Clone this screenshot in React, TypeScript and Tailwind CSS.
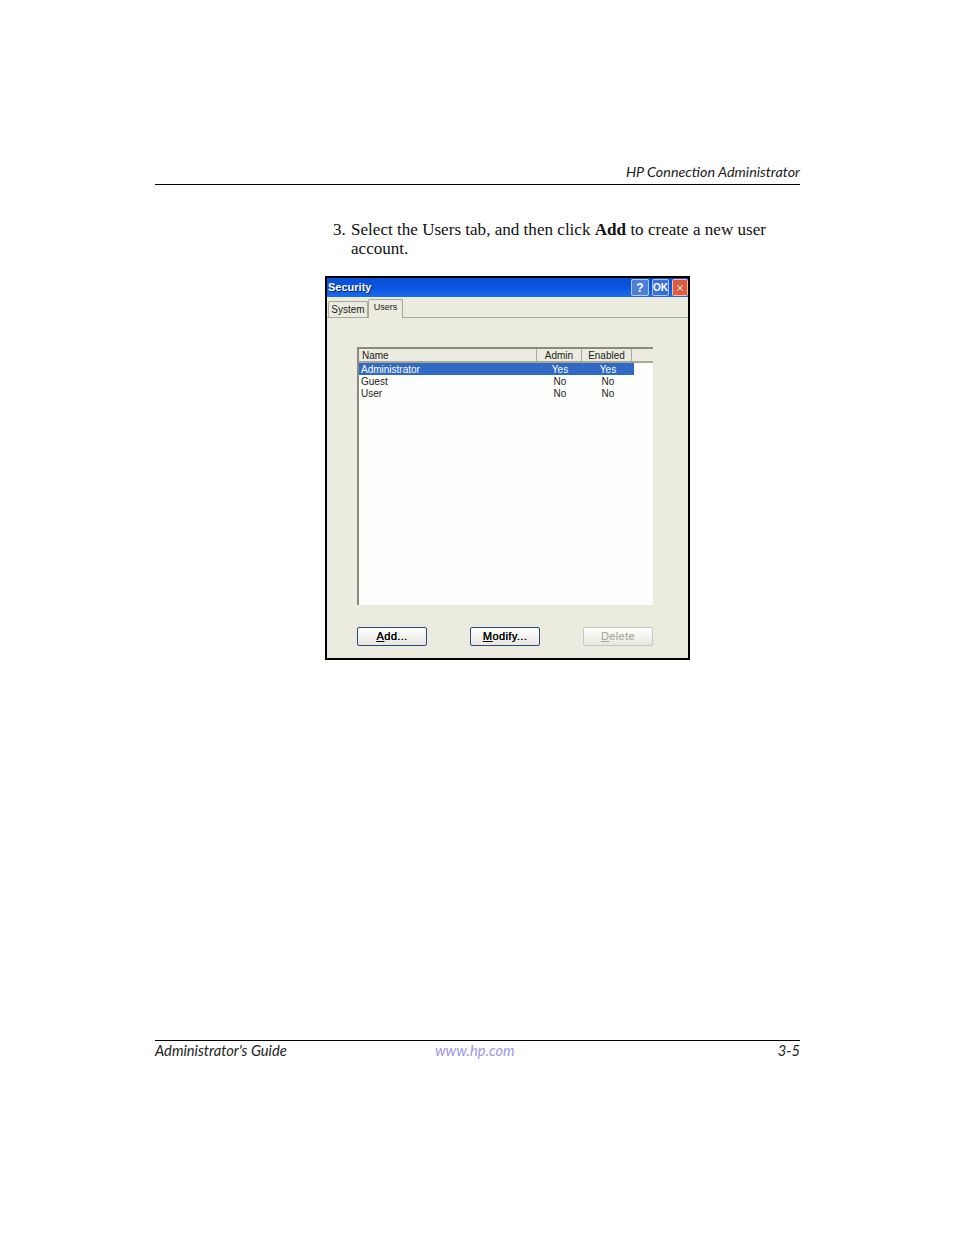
import React from "react";
import { X } from "lucide-react";

const users = [
  { name: "Administrator", admin: "Yes", enabled: "Yes" },
  { name: "Guest", admin: "No", enabled: "No" },
  { name: "User", admin: "No", enabled: "No" },
];

const pageFont = "font-['Lato','Liberation_Sans',sans-serif]";
const uiFont = "font-['Liberation_Sans','Noto_Sans',sans-serif]";

const TitleButton = ({ className, children }: { className: string; children: React.ReactNode }) => (
  <div className={`flex h-[17px] items-center justify-center rounded-[2px] border border-white/60 text-white ${className}`}>
    {children}
  </div>
);

const DialogButton = ({ hotkey, rest, disabled }: { hotkey: string; rest: string; disabled?: boolean }) => (
  <button
    className={`flex h-[19px] w-[70px] items-center justify-center rounded-[2px] border bg-gradient-to-b from-white to-[#e8e7df] text-[11px] leading-none tracking-[0.4px] ${
      disabled ? "border-[#c9c7ba] text-[#a1a192]" : "border-[#2a4a7a] text-black [text-shadow:0.2px_0_0_#000]"
    }`}
  >
    <span className="underline">{hotkey}</span>
    {rest}
  </button>
);

export default function App() {
  return (
    <div className="h-[1235px] w-[954px] bg-white pl-[155px] pt-[164px]">
      <div className="w-[645px]">
        <div className={`flex h-[21px] items-start justify-end border-b border-black text-[14.35px] italic leading-[16px] text-[#222] ${pageFont}`}>
          HP Connection Administrator
        </div>

        <div className="mt-[35px] flex pl-[178px] font-['Liberation_Serif',serif] text-[17.08px] leading-[19px] text-[#111]">
          <span className="w-[18px] shrink-0">3.</span>
          <p className="w-[430px]">
            Select the Users tab, and then click <b>Add</b> to create a new user account.
          </p>
        </div>

        <div className={`ml-[170px] mt-[18px] flex h-[384px] w-[365px] flex-col border-2 border-black bg-[#ecebdf] ${uiFont}`}>
          <div className="flex h-[19px] shrink-0 items-center justify-between bg-gradient-to-b from-[#0a4fd6] via-[#0a55e0] to-[#1a6cf0] pl-[1px]">
            <span className="text-[11px] font-bold text-white [text-shadow:1px_1px_0_#0a246a]">Security</span>
            <div className="flex gap-[3px]">
              <TitleButton className="w-[18px] bg-[#4d7fd8] text-[12px] font-bold">?</TitleButton>
              <TitleButton className="w-[17px] bg-[#3a6fdc] text-[10px] font-bold">OK</TitleButton>
              <TitleButton className="w-[16px] bg-[#de5b3c]">
                <X size={10} strokeWidth={2.5} />
              </TitleButton>
            </div>
          </div>

          <div className="flex h-[21px] shrink-0 items-end border-b border-[#a9a797] text-[10px] text-[#222]">
            <div className="ml-[1px] flex h-[16px] w-[40px] items-center justify-center rounded-t-[2px] border border-b-0 border-[#a9a797]">
              System
            </div>
            <div className="-mb-[1px] flex h-[19px] w-[35px] items-start justify-center rounded-t-[2px] border border-b-0 border-[#a9a797] bg-[#ecebdf] text-[9px] leading-[15px]">
              Users
            </div>
          </div>

          <div className="ml-[30px] mt-[29px] flex h-[258px] w-[296px] flex-col border-l-2 border-t-2 border-[#8a8a80] bg-[#fefefc] text-[10px] leading-[14px] text-[#222]">
            <div className="flex h-[14px] shrink-0 border-b-2 border-[#a9a797] bg-[#ecebdf]">
              <div className="w-[178px] border-r border-[#a9a797] pl-[3px]">Name</div>
              <div className="w-[45px] border-r border-[#a9a797] text-center">Admin</div>
              <div className="w-[50px] border-r border-[#a9a797] text-center">Enabled</div>
            </div>
            {users.map((u, i) => (
              <div key={u.name} className={`flex h-[12px] w-[275px] ${i === 0 ? "bg-[#316ac5] text-white" : ""}`}>
                <div className="w-[178px] pl-[2px]">{u.name}</div>
                <div className="w-[46px] text-center">{u.admin}</div>
                <div className="w-[50px] text-center">{u.enabled}</div>
              </div>
            ))}
          </div>

          <div className="ml-[30px] mt-[22px] flex w-[296px] justify-between">
            <DialogButton hotkey="A" rest="dd..." />
            <DialogButton hotkey="M" rest="odify..." />
            <DialogButton hotkey="D" rest="elete" disabled />
          </div>
        </div>

        <div className={`mt-[380px] flex h-[20px] border-t border-black text-[14.7px] italic leading-[18px] ${pageFont}`}>
          <span className="w-[280px] text-[#222]">Administrator's Guide</span>
          <span className="text-[#9a94ee]">www.hp.com</span>
          <span className="ml-auto text-[#222]">3-5</span>
        </div>
      </div>
    </div>
  );
}
